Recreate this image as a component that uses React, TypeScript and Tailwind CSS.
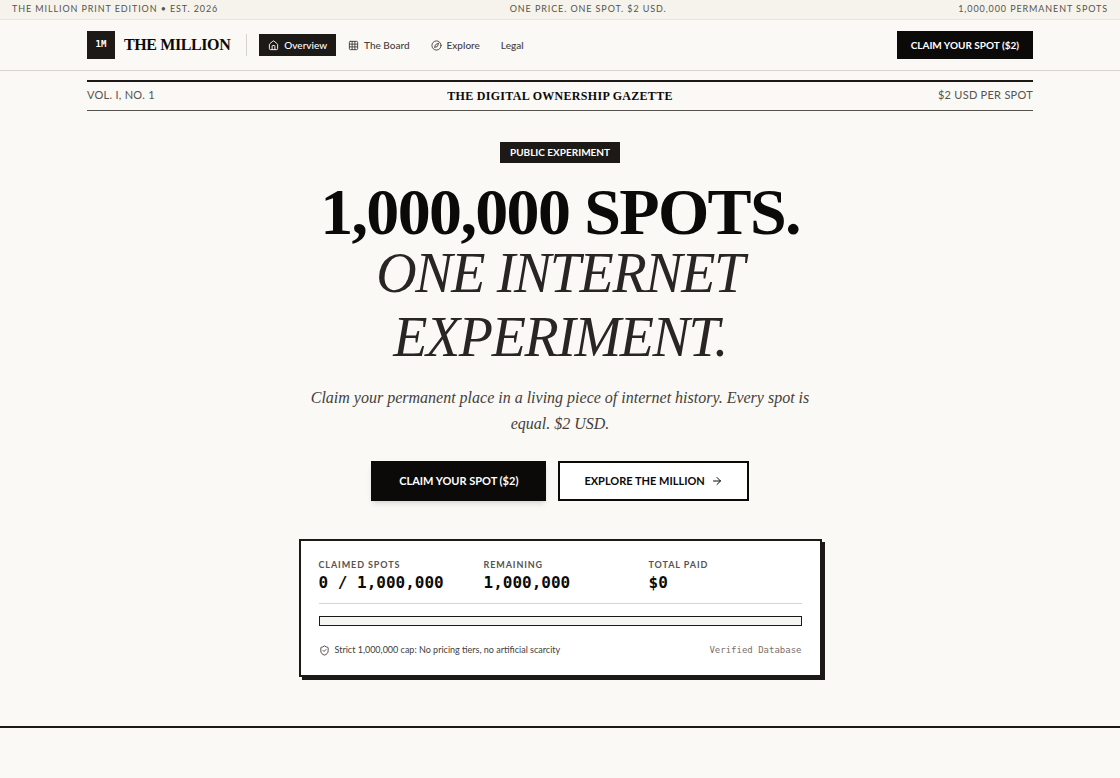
import React from 'react';
import { ArrowRight, Compass, Grid3x3, House, ShieldCheck } from 'lucide-react';

const navItems = [
    { label: 'Overview', icon: House, active: true },
    { label: 'The Board', icon: Grid3x3, active: false },
    { label: 'Explore', icon: Compass, active: false },
    { label: 'Legal', icon: null, active: false },
];

const stats = [
    { label: 'CLAIMED SPOTS', value: '0 / 1,000,000' },
    { label: 'REMAINING', value: '1,000,000' },
    { label: 'TOTAL PAID', value: '$0' },
];

function TopBar() {
    return (
        <div className="flex h-5 items-center justify-between border-b border-[#e7e5dc] bg-[#f5f3ec] px-3 pb-px text-[9px] leading-3 tracking-widest text-[#57534e]">
            <span>THE MILLION PRINT EDITION • EST. 2026</span>
            <span>ONE PRICE. ONE SPOT. $2 USD.</span>
            <span>1,000,000 PERMANENT SPOTS</span>
        </div>
    );
}

function Header() {
    return (
        <header className="border-b border-[#d6d3d1]">
            <div className="mx-auto flex h-[50px] w-full max-w-[946px] items-center justify-between">
                <div className="flex items-center">
                    <a href="#" className="flex items-center gap-[9px]">
                        <span className="flex size-7 items-center justify-center bg-[#1c1917] font-['DejaVu_Sans_Mono',monospace] text-[9px] font-bold text-white">
                            1M
                        </span>
                        <span className="font-['Liberation_Serif',serif] text-base font-bold tracking-tight text-[#0c0a09]">
                            THE MILLION
                        </span>
                    </a>
                    <div className="mr-3 ml-4 h-[22px] w-px bg-[#d6d3d1]" />
                    <nav className="flex items-center gap-[3px]">
                        {navItems.map(({ label, icon: Icon, active }) => (
                            <a
                                key={label}
                                href="#"
                                className={`flex h-[22px] items-center gap-[5px] px-[9px] text-[10px] font-medium ${
                                    active ? 'bg-[#1c1917] text-white' : 'text-[#44403c]'
                                }`}
                            >
                                {Icon && <Icon size={11} strokeWidth={2} />}
                                {label}
                            </a>
                        ))}
                    </nav>
                </div>
                <button className="h-7 bg-[#0c0a09] px-[14px] text-[10px] font-bold text-white">
                    CLAIM YOUR SPOT ($2)
                </button>
            </div>
        </header>
    );
}

function Masthead() {
    return (
        <div className="mx-auto mt-[9px] flex h-[31px] w-full max-w-[946px] items-center justify-between border-t-2 border-b border-t-[#1c1917] border-b-[#57534e] pb-px text-[11px] tracking-wide text-[#57534e]">
            <span className="flex-1">VOL. I, NO. 1</span>
            <span className="font-['Liberation_Serif',serif] text-xs font-bold tracking-wide text-[#0c0a09]">
                THE DIGITAL OWNERSHIP GAZETTE
            </span>
            <span className="flex-1 text-right">$2 USD PER SPOT</span>
        </div>
    );
}

function StatsCard() {
    return (
        <div className="mt-[38px] w-full max-w-[523px] border-2 border-[#1c1917] bg-white px-[18px] pt-[18px] pb-[19px] shadow-[3px_3px_0_0_#1c1917]">
            <dl className="grid grid-cols-3 gap-3 border-b border-[#d6d3d1] pb-[10px]">
                {stats.map((stat) => (
                    <div key={stat.label}>
                        <dt className="text-[9px] leading-3 font-bold tracking-widest text-[#57534e]">{stat.label}</dt>
                        <dd className="mt-0.5 font-['DejaVu_Sans_Mono',monospace] text-base leading-5 font-bold text-[#0c0a09]">
                            {stat.value}
                        </dd>
                    </div>
                ))}
            </dl>
            <div
                role="progressbar"
                aria-label="Claimed spots"
                aria-valuenow={0}
                aria-valuemin={0}
                aria-valuemax={1000000}
                className="mt-3 h-[10px] border border-[#1c1917] bg-[#f5f5f4]"
            />
            <div className="mt-[18px] flex items-center justify-between leading-3">
                <span className="flex items-center gap-[5px] text-[9px] text-[#44403c]">
                    <ShieldCheck size={11} />
                    Strict 1,000,000 cap: No pricing tiers, no artificial scarcity
                </span>
                <span className="font-['DejaVu_Sans_Mono',monospace] text-[9px] text-[#78716c]">Verified Database</span>
            </div>
        </div>
    );
}

function Hero() {
    return (
        <section className="flex flex-col items-center border-b-2 border-[#1c1917] pt-[31px] pb-[49px] text-center">
            <span className="flex h-[21px] items-center bg-[#1c1917] px-[10px] text-[10px] font-bold text-white">
                PUBLIC EXPERIMENT
            </span>
            <h1 className="mt-5 max-w-[540px] font-['Liberation_Serif',serif]">
                <span className="block text-[66px] leading-[58px] font-bold tracking-tight whitespace-nowrap text-[#0c0a09]">
                    1,000,000 SPOTS.
                </span>
                <span className="block text-[56px] leading-[64px] tracking-tight text-[#292524] italic">
                    ONE INTERNET EXPERIMENT.
                </span>
            </h1>
            <p className="mt-4 max-w-[500px] font-['Liberation_Serif',serif] text-base leading-[26px] text-[#44403c] italic">
                Claim your permanent place in a living piece of internet history. Every spot is equal. $2 USD.
            </p>
            <div className="mt-6 flex gap-3">
                <button className="h-10 bg-[#0c0a09] px-7 text-[11px] font-bold text-white shadow-md">
                    CLAIM YOUR SPOT ($2)
                </button>
                <button className="flex h-10 items-center gap-[6px] border-2 border-[#0c0a09] bg-white px-6 text-[11px] font-bold text-[#0c0a09]">
                    EXPLORE THE MILLION
                    <ArrowRight size={12} />
                </button>
            </div>
            <div className="flex w-full justify-center text-left">
                <StatsCard />
            </div>
        </section>
    );
}

export default function App() {
    return (
        <div className="min-h-screen bg-[#faf9f5] font-['Lato',sans-serif] text-[#1c1917]">
            <TopBar />
            <Header />
            <main>
                <Masthead />
                <Hero />
            </main>
        </div>
    );
}
